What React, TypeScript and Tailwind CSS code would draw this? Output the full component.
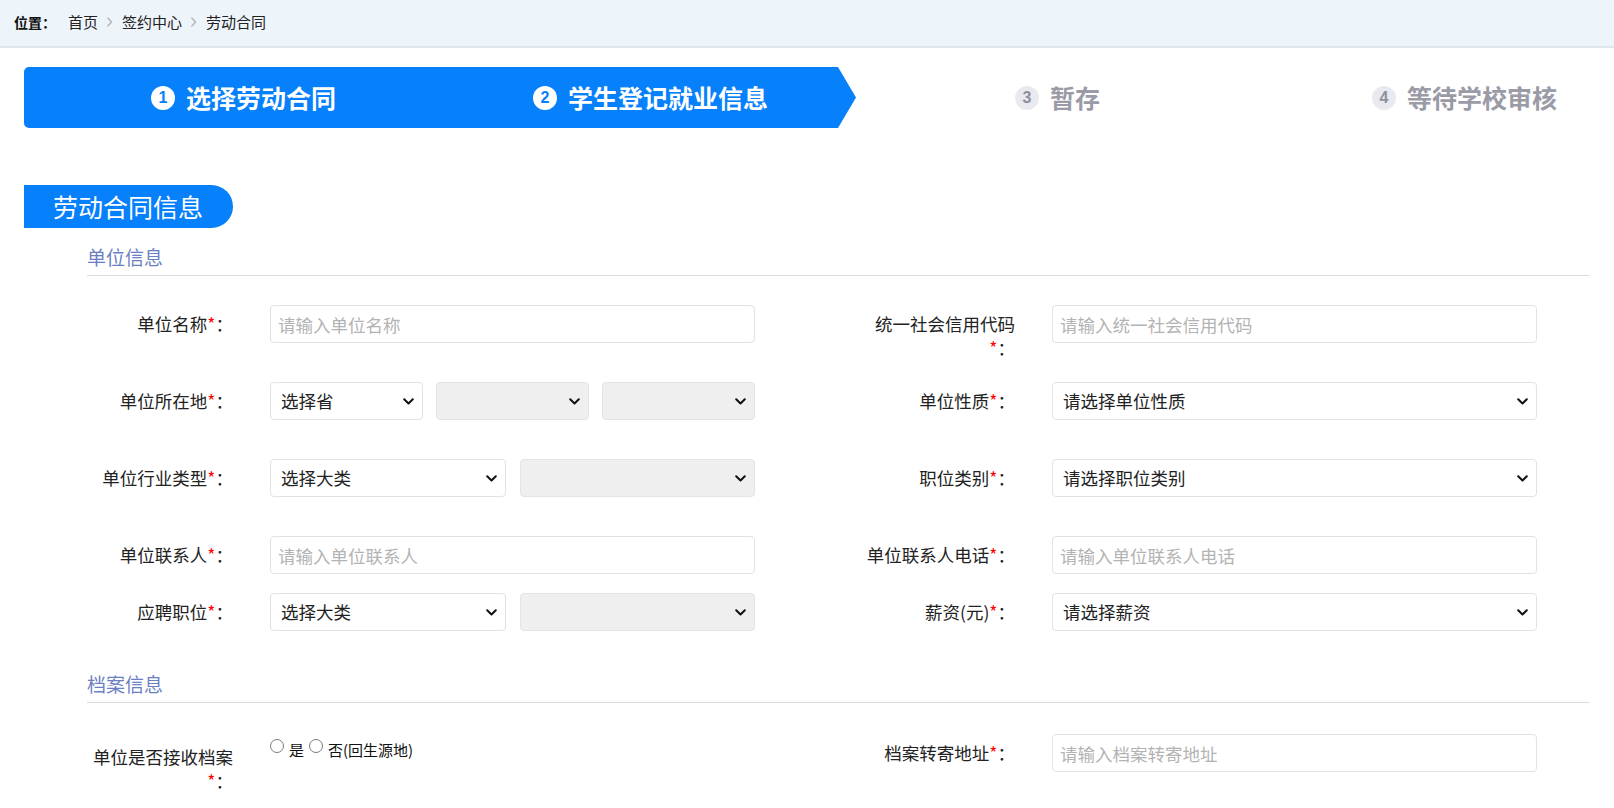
import React from "react";

function Chevron() {
  return (
    <svg width="11" height="7" viewBox="0 0 11 7" className="shrink-0">
      <path d="M1.2 1.2 L5.5 5.5 L9.8 1.2" fill="none" stroke="#111" strokeWidth="2" strokeLinecap="round" strokeLinejoin="round" />
    </svg>
  );
}

function Crumb() {
  return (
    <svg width="6" height="10" viewBox="0 0 6 10" className="mx-[9px] shrink-0">
      <path d="M1 1.2 L4.6 5 L1 8.8" fill="none" stroke="#b3b8be" strokeWidth="1.6" strokeLinecap="round" strokeLinejoin="round" />
    </svg>
  );
}

function Step({ n, text, active }: { n: number; text: string; active: boolean }) {
  return (
    <div className="flex w-[407px] shrink-0 items-center justify-center gap-[11px]">
      <span
        className={
          active
            ? "flex h-[24px] w-[24px] items-center justify-center rounded-full bg-white font-['Liberation_Sans',sans-serif] text-[16px] font-bold leading-none text-[#0780fc]"
            : "flex h-[24px] w-[24px] items-center justify-center rounded-full bg-[#e9eaef] font-['Liberation_Sans',sans-serif] text-[16px] font-bold leading-none text-[#8e909c]"
        }
      >
        {n}
      </span>
      <span className={active ? "text-[25px] font-bold leading-none text-white" : "text-[25px] font-bold leading-none text-[#9a9ba6]"}>
        {text}
      </span>
    </div>
  );
}

function Label({ text, className = "pt-[7px]" }: { text: string; className?: string }) {
  return (
    <div className={"w-[155px] shrink-0 text-right text-[17.5px] leading-[24px] text-[#222] " + className}>
      {text}
      <span className="text-[#ff0000]">*</span>：
    </div>
  );
}

function TextInput({ placeholder }: { placeholder: string }) {
  return (
    <input
      placeholder={placeholder}
      className="h-[38px] w-[485px] rounded-[4px] border border-[#e2e2e2] bg-white px-[7px] text-[17.5px] text-[#222] outline-none placeholder:text-[#b3b3b3]"
    />
  );
}

function Select({ text, disabled }: { text?: string; disabled?: boolean }) {
  return (
    <div
      className={
        disabled
          ? "flex h-[38px] items-center justify-between rounded-[4px] border border-[#e4e4e4] bg-[#efefef] pl-[10px] pr-[8px]"
          : "flex h-[38px] items-center justify-between rounded-[4px] border border-[#e2e2e2] bg-white pl-[10px] pr-[8px]"
      }
    >
      <span className="text-[17.5px] leading-none text-[#222]">{text ?? ""}</span>
      <Chevron />
    </div>
  );
}

function Field({ label, children }: { label: string; children: React.ReactNode }) {
  return (
    <div className="flex items-start">
      <Label text={label} />
      <div className="ml-[37px] w-[485px]">{children}</div>
    </div>
  );
}

function Row({ children, mb }: { children: React.ReactNode; mb: string }) {
  return <div className={"grid h-[38px] grid-cols-[782px_1fr] " + mb}>{children}</div>;
}

function SectionHeader({ text, className }: { text: string; className: string }) {
  return (
    <div className={"ml-[63px] h-[31px] border-b border-[#dcdcdc] text-[19px] leading-[24px] text-[#6b80c3] " + className}>
      {text}
    </div>
  );
}

function Radio({ label }: { label: string }) {
  return (
    <div className="flex items-start">
      <span className="mt-[-1px] h-[14px] w-[14px] rounded-full border border-[#7a7a7a] bg-white" />
      <span className="ml-[5px] text-[15px] leading-[20px] text-[#111]">{label}</span>
    </div>
  );
}

export default function App() {
  return (
    <div className="min-h-screen bg-white font-['Noto_Sans_CJK_SC',sans-serif] text-[#222]">
      <div className="flex h-[48px] items-center border-b-2 border-[#dfe6ec] bg-[#edf4fa] pb-[2px] pl-[14px]">
        <span className="text-[14px] font-bold text-[#111]">位置：</span>
        <span className="ml-[12px] text-[15px] text-[#222]">首页</span>
        <Crumb />
        <span className="text-[15px] text-[#222]">签约中心</span>
        <Crumb />
        <span className="text-[15px] text-[#222]">劳动合同</span>
      </div>

      <div className="px-[24px] pt-[19px]">
        <div className="flex h-[61px] overflow-hidden">
          <div className="flex w-[832px] shrink-0 rounded-l-[5px] bg-[#0780fc] pl-[16px] [clip-path:polygon(0_0,814px_0,100%_50%,814px_100%,0_100%)]">
            <Step n={1} text="选择劳动合同" active />
            <Step n={2} text="学生登记就业信息" active />
          </div>
          <div className="-ml-[2px] flex">
            <Step n={3} text="暂存" active={false} />
            <Step n={4} text="等待学校审核" active={false} />
          </div>
        </div>

        <div className="mt-[57px] flex h-[43px] w-[209px] items-center rounded-r-full bg-[#0780fc] pl-[29px] text-[25px] leading-none text-white">
          劳动合同信息
        </div>

        <SectionHeader text="单位信息" className="mt-[17px]" />

        <div className="ml-[54px] pt-[29px]">
          <Row mb="mb-[39px]">
            <Field label="单位名称">
              <TextInput placeholder="请输入单位名称" />
            </Field>
            <Field label="统一社会信用代码">
              <TextInput placeholder="请输入统一社会信用代码" />
            </Field>
          </Row>
          <Row mb="mb-[39px]">
            <Field label="单位所在地">
              <div className="grid grid-cols-3 gap-[13px]">
                <Select text="选择省" />
                <Select disabled />
                <Select disabled />
              </div>
            </Field>
            <Field label="单位性质">
              <Select text="请选择单位性质" />
            </Field>
          </Row>
          <Row mb="mb-[39px]">
            <Field label="单位行业类型">
              <div className="grid grid-cols-2 gap-[14px]">
                <Select text="选择大类" />
                <Select disabled />
              </div>
            </Field>
            <Field label="职位类别">
              <Select text="请选择职位类别" />
            </Field>
          </Row>
          <Row mb="mb-[19px]">
            <Field label="单位联系人">
              <TextInput placeholder="请输入单位联系人" />
            </Field>
            <Field label="单位联系人电话">
              <TextInput placeholder="请输入单位联系人电话" />
            </Field>
          </Row>
          <Row mb="mb-0">
            <Field label="应聘职位">
              <div className="grid grid-cols-2 gap-[14px]">
                <Select text="选择大类" />
                <Select disabled />
              </div>
            </Field>
            <Field label="薪资(元)">
              <Select text="请选择薪资" />
            </Field>
          </Row>
        </div>

        <SectionHeader text="档案信息" className="mt-[41px]" />

        <div className="ml-[54px] pt-[31px]">
          <Row mb="mb-0">
            <div className="flex items-start">
              <Label text="单位是否接收档案" className="pt-[11px]" />
              <div className="ml-[37px] mt-[6px] flex items-start gap-[5px]">
                <Radio label="是" />
                <Radio label="否(回生源地)" />
              </div>
            </div>
            <Field label="档案转寄地址">
              <TextInput placeholder="请输入档案转寄地址" />
            </Field>
          </Row>
        </div>
      </div>
    </div>
  );
}
